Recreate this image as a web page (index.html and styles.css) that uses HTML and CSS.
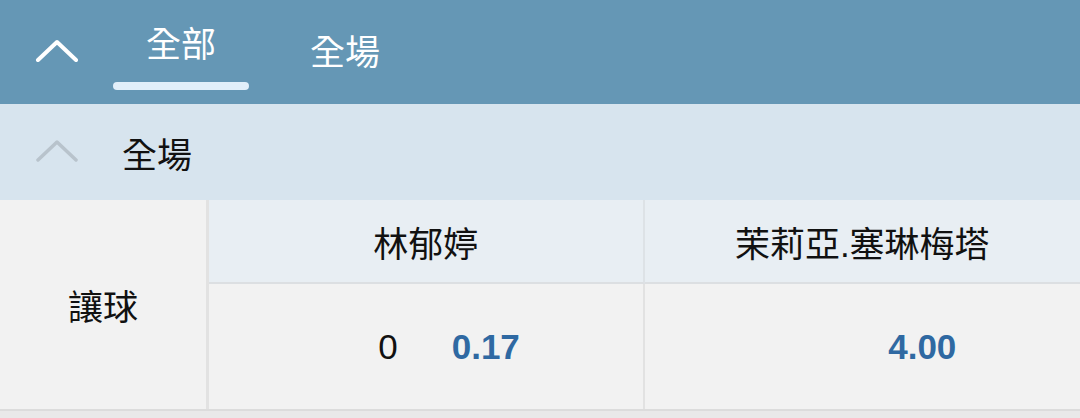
FILE: index.html
```html
<!DOCTYPE html>
<html lang="zh-Hant">
<head>
<meta charset="utf-8">
<link rel="stylesheet" href="styles.css">
</head>
<body>
<header class="topbar">
  <svg class="chev chev-top" width="44" height="24" viewBox="0 0 44 24"><polyline points="3,22 22,4 41,22" fill="none" stroke="#ffffff" stroke-width="4" stroke-linecap="round" stroke-linejoin="round"/></svg>
  <nav class="tabs">
    <div class="tab active">全部<span class="bar"></span></div>
    <div class="tab">全場</div>
  </nav>
</header>
<section class="sechead">
  <svg class="chev chev-sec" width="44" height="24" viewBox="0 0 44 24"><polyline points="3,22 22,4 41,22" fill="none" stroke="#b8c3cc" stroke-width="3.5" stroke-linecap="round" stroke-linejoin="round"/></svg>
  <span class="sectitle">全場</span>
</section>
<div class="market">
  <div class="label">讓球</div>
  <div class="th">林郁婷</div>
  <div class="th last">茉莉亞.塞琳梅塔</div>
  <div class="td"><span class="hcp">0</span><span class="odds">0.17</span></div>
  <div class="td last"><span class="hcp"></span><span class="odds">4.00</span></div>
</div>
<div class="footstrip"></div>
</body>
</html>
```
FILE: styles.css
```css
html, body {
  margin: 0;
  padding: 0;
}
body {
  width: 1080px;
  height: 418px;
  overflow: hidden;
  background: #e9e9e9;
  font-family: "Liberation Sans", "Noto Sans CJK TC", sans-serif;
  color: #111;
}
.topbar {
  height: 104px;
  background: #6597b5;
  display: flex;
  align-items: flex-start;
  box-sizing: border-box;
  padding-left: 35px;
}
.chev { display: block; }
.chev-top { margin-top: 38px; }
.tabs {
  display: flex;
  margin-left: 34px;
}
.tab {
  position: relative;
  width: 136px;
  text-align: center;
  color: #ffffff;
  font-family: "Noto Sans CJK TC", sans-serif;
  font-size: 35px;
  line-height: 40px;
  padding-top: 30px;
  margin-right: 28px;
}
.tab.active {
  padding-top: 22px;
}
.tab .bar {
  position: absolute;
  left: 0;
  right: 0;
  top: 82px;
  height: 8px;
  border-radius: 4px;
  background: #e1effa;
}
.sechead {
  height: 96px;
  background: #d7e4ee;
  display: flex;
  align-items: center;
  padding-left: 35px;
}
.chev-sec { margin-top: -4px; }
.sectitle {
  margin-left: 43px;
  font-family: "Noto Sans CJK TC", sans-serif;
  font-size: 35px;
  color: #111;
}
.market {
  display: grid;
  grid-template-columns: 209px 1fr 1fr;
  grid-template-rows: 84px 125px;
  background: #f2f2f2;
  border-bottom: 2px solid #dcdcdc;
}
.label {
  grid-row: 1 / 3;
  display: flex;
  align-items: center;
  justify-content: center;
  font-family: "Noto Sans CJK TC", sans-serif;
  font-size: 35px;
  border-right: 3px solid #e2e2e2;
  background: #f2f2f2;
}
.th {
  display: flex;
  align-items: center;
  justify-content: center;
  background: #e8eef3;
  font-family: "Liberation Sans", "Noto Sans CJK TC", sans-serif;
  font-size: 35px;
  border-right: 2px solid #dde2e6;
  border-bottom: 2px solid #dcdfe2;
}
.th.last, .td.last { border-right: none; }
.td {
  display: flex;
  align-items: center;
  justify-content: center;
  border-right: 2px solid #e2e2e2;
  font-size: 35px;
}
.hcp {
  width: 120px;
  text-align: right;
  padding-right: 28px;
  box-sizing: border-box;
  color: #111;
}
.odds {
  width: 120px;
  text-align: center;
  font-weight: bold;
  color: #2f69a2;
}
.footstrip {
  height: 8px;
  background: #e9e9e9;
}
```
